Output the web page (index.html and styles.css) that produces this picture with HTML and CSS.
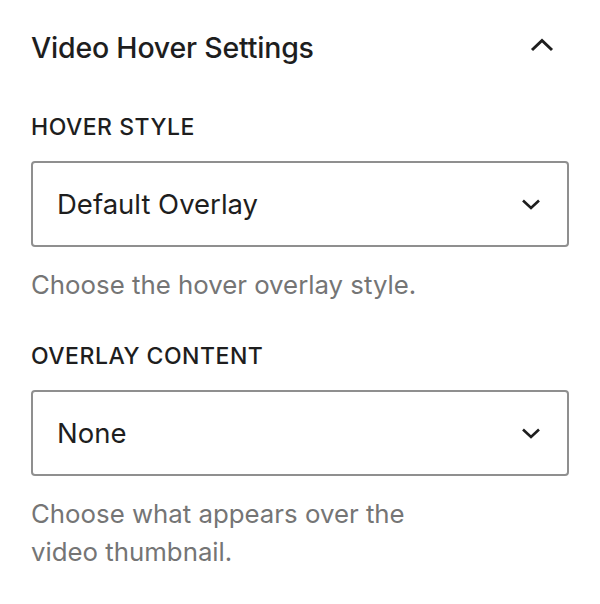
FILE: index.html
```html
<!DOCTYPE html>
<html lang="en">
<head>
<meta charset="utf-8">
<title>Video Hover Settings</title>
<link rel="stylesheet" href="styles.css">
</head>
<body>
<section class="panel">
  <button class="panel-toggle" type="button" aria-expanded="true">
    <span class="panel-title">Video Hover Settings</span>
    <svg class="toggle-icon" width="24" height="14" viewBox="0 0 24 14" aria-hidden="true">
      <path d="M2 12 L12 2.5 L22 12" fill="none" stroke="#1e1e1e" stroke-width="3"/>
    </svg>
  </button>

  <div class="field">
    <label class="field-label" for="hover-style">Hover Style</label>
    <div class="select">
      <span class="select-value" id="hover-style">Default Overlay</span>
      <svg class="select-arrow" width="20" height="12" viewBox="0 0 20 12" aria-hidden="true">
        <path d="M2 2.5 L10 10 L18 2.5" fill="none" stroke="#1e1e1e" stroke-width="2.6"/>
      </svg>
    </div>
    <p class="field-help">Choose the hover overlay style.</p>
  </div>

  <div class="field">
    <label class="field-label" for="overlay-content">Overlay Content</label>
    <div class="select">
      <span class="select-value" id="overlay-content">None</span>
      <svg class="select-arrow" width="20" height="12" viewBox="0 0 20 12" aria-hidden="true">
        <path d="M2 2.5 L10 10 L18 2.5" fill="none" stroke="#1e1e1e" stroke-width="2.6"/>
      </svg>
    </div>
    <p class="field-help">Choose what appears over the<br>video thumbnail.</p>
  </div>
</section>
</body>
</html>
```
FILE: styles.css
```css
html, body {
  margin: 0;
  padding: 0;
  background: #ffffff;
}

body {
  font-family: Inter, "Noto Sans", "Liberation Sans", sans-serif;
  color: #1e1e1e;
}

.panel {
  padding: 0 31px 0 31px;
}

.panel-toggle {
  display: flex;
  align-items: center;
  justify-content: space-between;
  width: 100%;
  height: 94px;
  margin: 0;
  padding: 0 15px 0 0;
  border: 0;
  background: none;
  font: inherit;
  color: inherit;
  text-align: left;
}

.panel-title {
  font-size: 28.5px;
  font-weight: 500;
  letter-spacing: -0.2px;
}

.toggle-icon {
  display: block;
  margin-top: -4px;
}

.field {
  display: flex;
  flex-direction: column;
}

.field + .field {
  margin-top: 19px;
}

.field-label {
  display: block;
  margin-top: 19px;
  font-size: 23px;
  font-weight: 500;
  line-height: 28px;
  text-transform: uppercase;
  letter-spacing: 0.5px;
}

.select {
  display: flex;
  align-items: center;
  justify-content: space-between;
  height: 86px;
  margin-top: 20px;
  padding: 0 26px 0 24px;
  box-sizing: border-box;
  border: 2px solid #8f8f8f;
  border-radius: 4px;
}

.select-value {
  font-size: 27.5px;
  font-weight: 400;
}

.select-arrow {
  display: block;
}

.field-help {
  margin: 19px 0 0;
  font-size: 25.8px;
  line-height: 38px;
  color: #757575;
}
```
